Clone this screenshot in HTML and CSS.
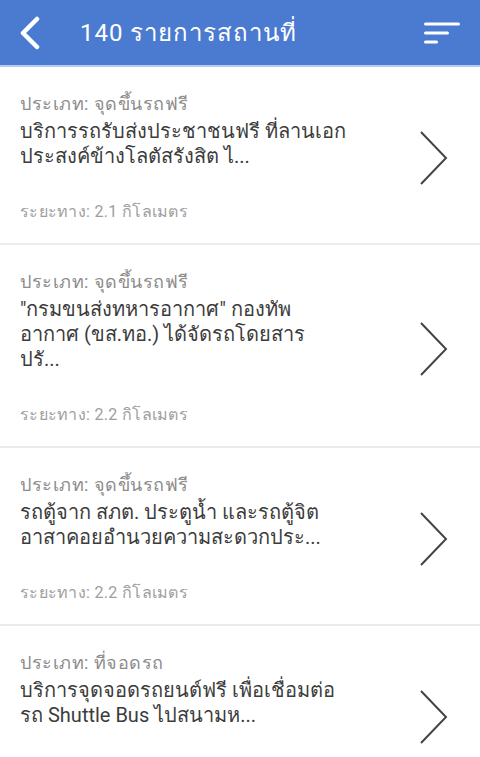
FILE: index.html
```html
<!DOCTYPE html>
<html lang="th">
<head>
    <meta charset="utf-8">
    <meta name="viewport" content="width=device-width, initial-scale=1">
    <title>140 รายการสถานที่</title>
    <link rel="stylesheet" href="styles.css">
</head>
<body>
    <div class="topbar">
        <svg class="back-icon" width="24" height="34" viewBox="0 0 24 34">
            <path d="M19 3 L5 17 L19 31" fill="none" stroke="#fff" stroke-width="4.5" stroke-linecap="round" stroke-linejoin="round"/>
        </svg>
        <h1 class="title">140 รายการสถานที่</h1>
        <svg class="filter-icon" width="36" height="24" viewBox="0 0 36 24">
            <line x1="1.5" y1="2" x2="34.5" y2="2" stroke="#fff" stroke-width="3" stroke-linecap="round"/>
            <line x1="1.5" y1="11" x2="23.5" y2="11" stroke="#fff" stroke-width="3" stroke-linecap="round"/>
            <line x1="1.5" y1="20" x2="12.5" y2="20" stroke="#fff" stroke-width="3" stroke-linecap="round"/>
        </svg>
    </div>

    <ul class="place-list">
        <li class="place">
            <div class="place-text">
                <div class="place-type">ประเภท: จุดขึ้นรถฟรี</div>
                <div class="place-name">บริการรถรับส่งประชาชนฟรี ที่ลานเอก<br>ประสงค์ข้างโลตัสรังสิต ไ...</div>
                <div class="place-dist">ระยะทาง: 2.1 กิโลเมตร</div>
            </div>
            <svg class="chevron" width="30" height="56" viewBox="0 0 30 56">
                <path d="M2 2 L27 28 L2 54" fill="none" stroke="#444" stroke-width="2"/>
            </svg>
        </li>
        <li class="place">
            <div class="place-text">
                <div class="place-type">ประเภท: จุดขึ้นรถฟรี</div>
                <div class="place-name">"กรมขนส่งทหารอากาศ" กองทัพ<br>อากาศ (ขส.ทอ.) ได้จัดรถโดยสาร<br>ปรั...</div>
                <div class="place-dist">ระยะทาง: 2.2 กิโลเมตร</div>
            </div>
            <svg class="chevron" width="30" height="56" viewBox="0 0 30 56">
                <path d="M2 2 L27 28 L2 54" fill="none" stroke="#444" stroke-width="2"/>
            </svg>
        </li>
        <li class="place">
            <div class="place-text">
                <div class="place-type">ประเภท: จุดขึ้นรถฟรี</div>
                <div class="place-name">รถตู้จาก สภต. ประตูน้ำ และรถตู้จิต<br>อาสาคอยอำนวยความสะดวกประ...</div>
                <div class="place-dist">ระยะทาง: 2.2 กิโลเมตร</div>
            </div>
            <svg class="chevron" width="30" height="56" viewBox="0 0 30 56">
                <path d="M2 2 L27 28 L2 54" fill="none" stroke="#444" stroke-width="2"/>
            </svg>
        </li>
        <li class="place">
            <div class="place-text">
                <div class="place-type">ประเภท: ที่จอดรถ</div>
                <div class="place-name">บริการจุดจอดรถยนต์ฟรี เพื่อเชื่อมต่อ<br>รถ Shuttle Bus ไปสนามห...</div>
                <div class="place-dist">ระยะทาง: 2.3 กิโลเมตร</div>
            </div>
            <svg class="chevron" width="30" height="56" viewBox="0 0 30 56">
                <path d="M2 2 L27 28 L2 54" fill="none" stroke="#444" stroke-width="2"/>
            </svg>
        </li>
    </ul>
</body>
</html>
```

FILE: styles.css
```css
body {
    margin: 0;
    font-family: Roboto, "Noto Sans", sans-serif;
    background: #fff;
    overflow: hidden;
}
.topbar {
    display: flex;
    align-items: center;
    height: 65px;
    padding: 0 20px 0 18px;
    background: #4b7bd1;
    border-bottom: 2px solid #b4cdf3;
}
.back-icon {
    flex: none;
}
.title {
    flex: 1;
    margin: 0 0 0 38px;
    color: #fff;
    font-size: 24px;
    font-weight: normal;
    line-height: 30px;
    letter-spacing: 1px;
}
.filter-icon {
    flex: none;
    margin-top: 2px;
}
.place-list {
    list-style: none;
    margin: 0;
    padding: 0;
}
.place {
    display: flex;
    align-items: center;
    padding: 24px 31px 18px 20px;
    border-bottom: 2px solid #ebebeb;
}
.place-text {
    flex: 1;
}
.place-type {
    color: #8c8c8c;
    font-size: 18px;
    line-height: 26px;
    letter-spacing: 0.5px;
}
.place-name {
    margin-top: 2px;
    color: #3c3c3c;
    font-size: 20px;
    line-height: 25px;
}
.place-dist {
    margin-top: 30px;
    color: #9e9e9e;
    font-size: 16px;
    line-height: 26px;
    letter-spacing: 0.3px;
}
.chevron {
    flex: none;
}
```
